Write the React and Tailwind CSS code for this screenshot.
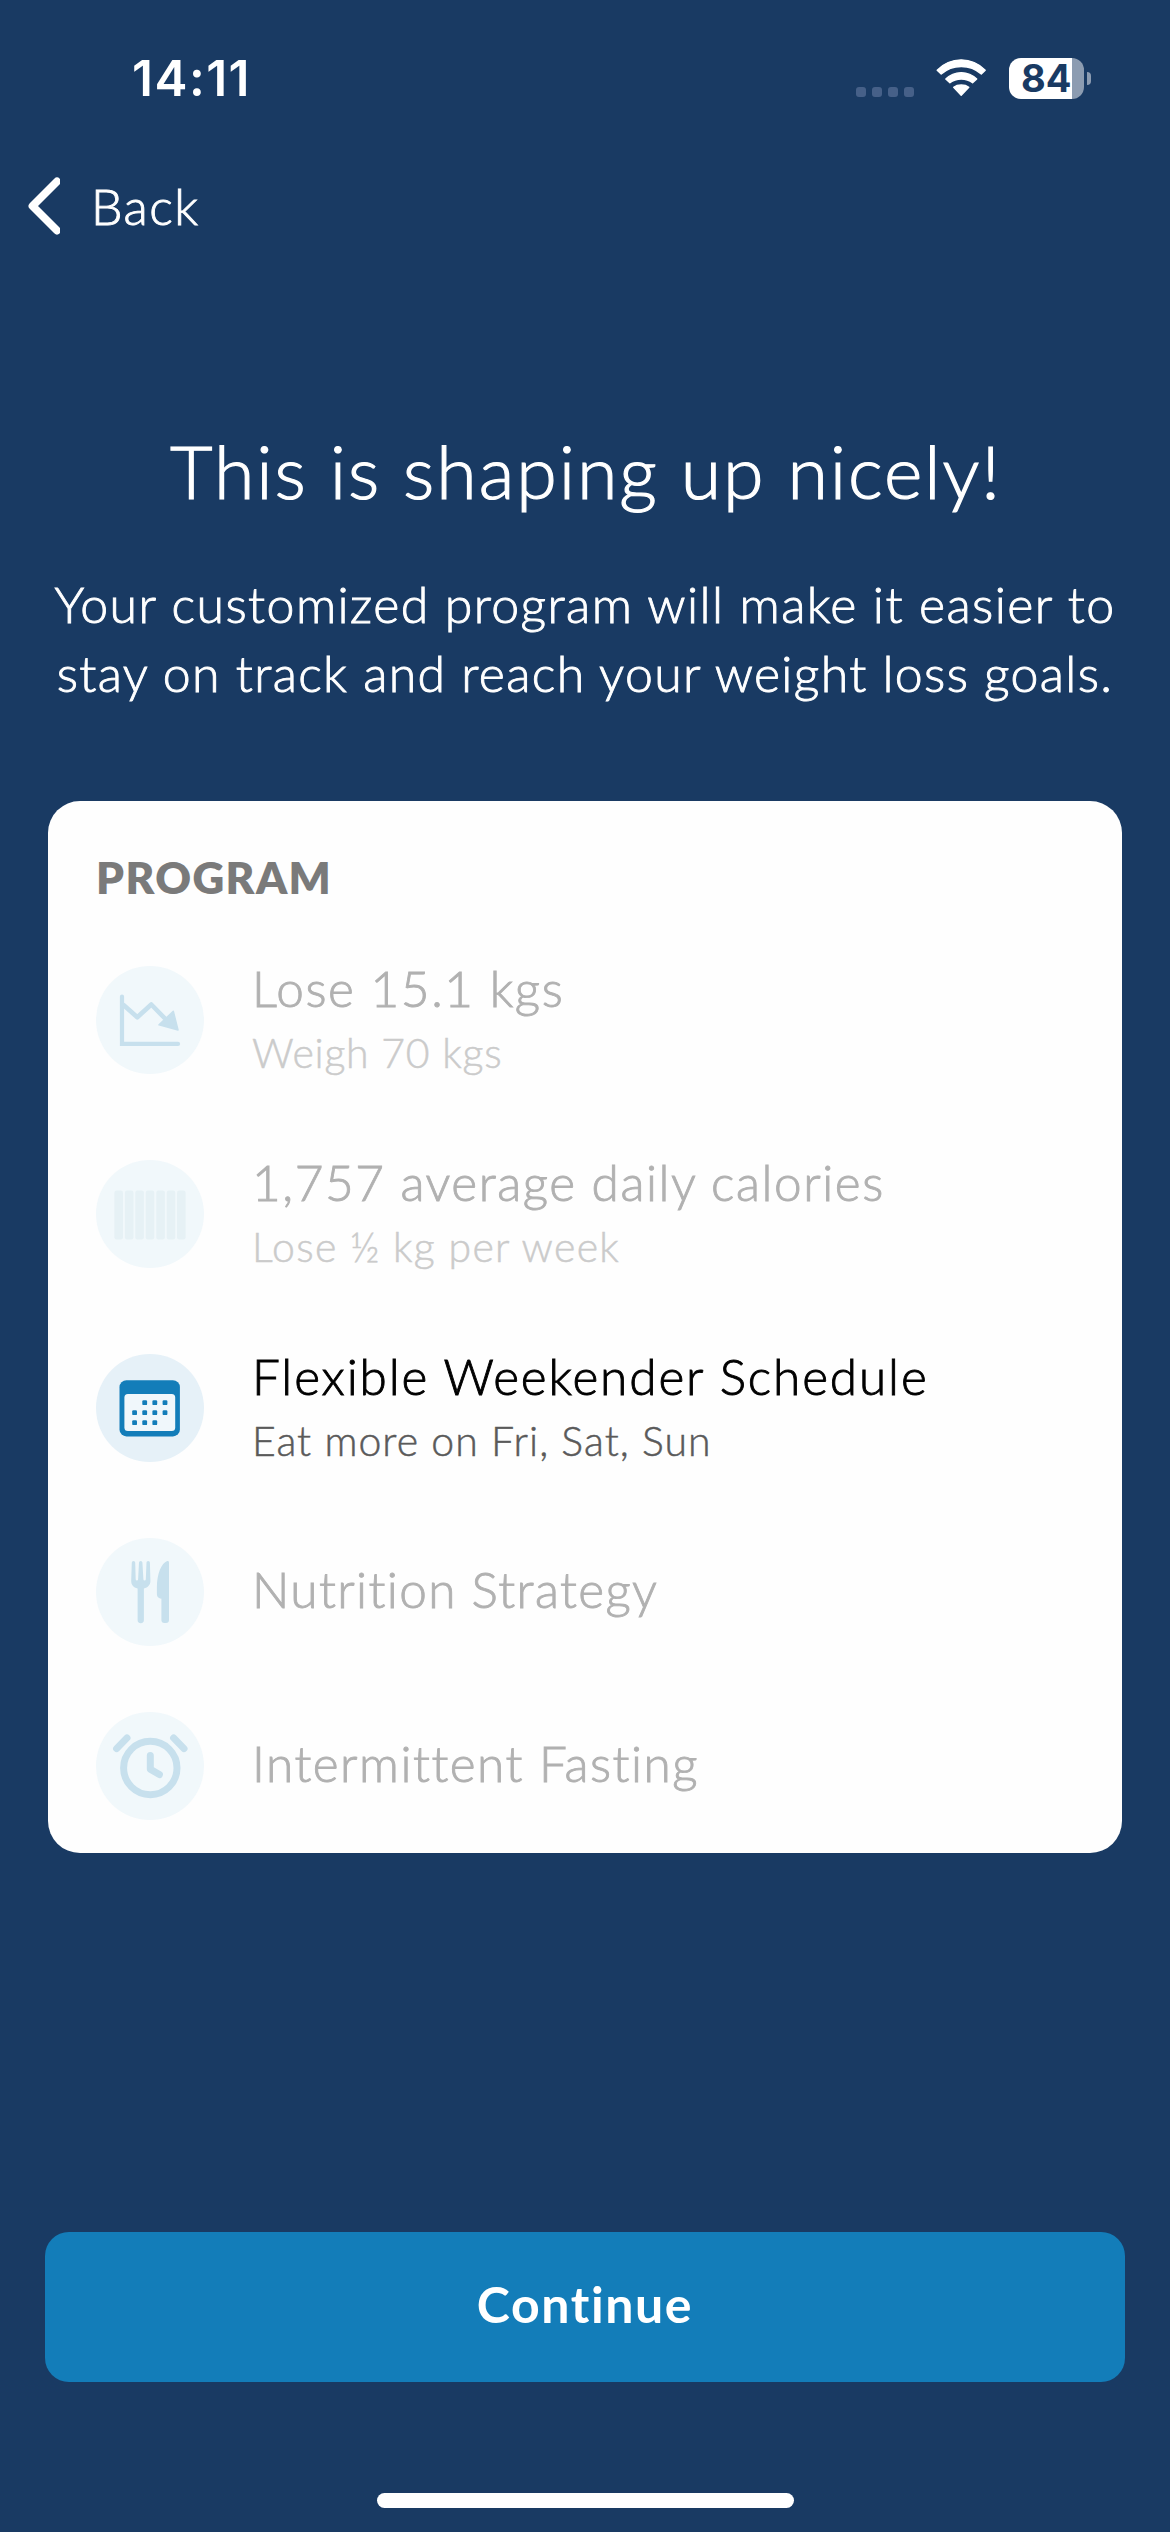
const FAINT = "#c7e0ed";

function ChartIcon() {
  return (
    <svg viewBox="0 0 108 108" className="size-full" fill="none">
      <path d="M26 30.5V77.9H82" stroke={FAINT} strokeWidth="4.2" strokeLinecap="round" />
      <path d="M27 38.5L41.3 51.3L55.3 38.5L70 53.5" stroke={FAINT} strokeWidth="4.6" strokeLinejoin="round" />
      <path d="M77.3 45.2L82 64L63 58.8Z" fill={FAINT} stroke={FAINT} strokeWidth="1.5" strokeLinejoin="round" />
    </svg>
  );
}

function BarsIcon() {
  return (
    <svg viewBox="0 0 108 108" className="size-full" fill="#e6f1f5">
      {[18.4, 28.9, 39.3, 49.7, 60.3, 70.7, 81].map((x) => (
        <rect key={x} x={x} y="30.6" width="8.6" height="48.8" rx="2.2" />
      ))}
    </svg>
  );
}

function CalendarIcon() {
  const dots = [
    [48.7, 48.7], [58.8, 48.7], [69, 48.7],
    [38.6, 58.7], [48.7, 58.7], [58.8, 58.7], [69, 58.7],
    [38.6, 68.7], [48.7, 68.7], [58.8, 68.7],
  ];
  return (
    <svg viewBox="0 0 108 108" className="size-full" fill="#137db9">
      <rect x="23.5" y="26.2" width="60.4" height="56.2" rx="7" />
      <rect x="28.4" y="40" width="50.8" height="37" rx="3.5" fill="#f0f7fb" />
      {dots.map(([x, y]) => (
        <rect key={`${x}-${y}`} x={x - 2.4} y={y - 2.4} width="4.8" height="4.8" rx="1.2" />
      ))}
    </svg>
  );
}

function CutleryIcon() {
  return (
    <svg viewBox="0 0 108 108" className="size-full" fill={FAINT}>
      <path d="M35.8 24.6a1.7 1.7 0 0 1 3.4 0L39.7 41.2a1.2 1.2 0 0 0 2.4 0L43 24.6a1.7 1.7 0 0 1 3.4 0L47.4 41.2a1.2 1.2 0 0 0 2.4 0L50.5 24.6a1.7 1.7 0 0 1 3.4 0L54.4 43C54.4 47 52 49.2 47.9 50.6V82a3.1 3.1 0 0 1-6.3 0V50.6C37.4 49.2 35.2 47 35.2 43Z" />
      <path d="M71.2 23.1C72.4 22.9 73 23.5 73 24.8V82a3 3 0 0 1-3 3h-1.6a3 3 0 0 1-3-3V60.8C61.8 60.2 60.9 58.6 60.9 55.6V49C61 36 65.4 25.2 71.2 23.1Z" />
    </svg>
  );
}

function AlarmIcon() {
  return (
    <svg viewBox="0 0 108 108" className="size-full" fill="none" stroke={FAINT} strokeWidth="7">
      <circle cx="54.3" cy="56" r="26.7" />
      <path d="M54.3 43.5V57.2L63.4 62.6" strokeLinecap="round" strokeLinejoin="round" />
      <path d="M20.6 36.6L31 25.9M77.6 25.9L88 36.6" strokeLinecap="round" />
    </svg>
  );
}

const rows = [
  { Icon: ChartIcon, title: "Lose 15.1 kgs", sub: "Weigh 70 kgs", titleGap: "tracking-[1.6px]", subGap: "tracking-[0.75px]" },
  { Icon: BarsIcon, title: "1,757 average daily calories", sub: "Lose ½ kg per week", titleGap: "tracking-[1.55px]", subGap: "tracking-[1.3px]" },
  { Icon: CalendarIcon, title: "Flexible Weekender Schedule", sub: "Eat more on Fri, Sat, Sun", titleGap: "tracking-[1.88px]", subGap: "tracking-[1.05px]", active: true },
  { Icon: CutleryIcon, title: "Nutrition Strategy", titleGap: "tracking-[1.37px]" },
  { Icon: AlarmIcon, title: "Intermittent Fasting", titleGap: "tracking-[1.5px]" },
];

function ProgramRow({ Icon, title, sub, titleGap, subGap, active }) {
  return (
    <li className="flex items-center gap-12">
      <div className={`size-[108px] shrink-0 rounded-full ${active ? "bg-[#e6f1f8]" : "bg-[#f1f8fb]"}`}>
        <Icon />
      </div>
      <div className={`font-light whitespace-nowrap ${sub ? "" : "pb-1.5"}`}>
        <div className={`text-[49.5px] leading-[64px] [-webkit-text-stroke:0.9px] ${titleGap} ${active ? "text-black" : "text-[#b1b1b1]"}`}>{title}</div>
        {sub && (
          <div className={`pt-px text-[41px] leading-[63px] [-webkit-text-stroke:0.5px] ${subGap} ${active ? "text-[#5a5a5a]" : "text-[#cbcbcb]"}`}>{sub}</div>
        )}
      </div>
    </li>
  );
}

function StatusBar() {
  return (
    <div className="flex h-[108px] items-center justify-between pt-12 pr-[79px] pl-[132px] font-['Inter',sans-serif]">
      <div className="text-[49.5px] leading-[60px] font-semibold tracking-[1.5px]">14:11</div>
      <div className="flex items-center">
        <div className="mt-[27px] flex gap-1.5">
          {[0, 1, 2, 3].map((i) => (
            <span key={i} className="size-2.5 rounded-[3px] bg-[#466088]" />
          ))}
        </div>
        <svg viewBox="0 0 51 38" className="mr-[22px] ml-[22px] h-[38px] w-[51px]" fill="#fff" stroke="#fff" strokeWidth="1.4" strokeLinejoin="round">
          <path d="M1.2 11.2C14.5 -2.6 35.8 -2.6 49.2 11.2L45.3 15C34.2 4.9 16.4 4.9 5.2 15Z" />
          <path d="M9.8 20.1C18.2 11.4 32.2 11.4 40.7 20.1L36.6 23.8C30.3 18.7 20.2 18.7 13.9 23.8Z" />
          <path d="M17.7 28.2C21.7 25.3 28.8 25.3 32.8 28.2L25.2 36.3Z" />
        </svg>
        <div className="flex items-center gap-[3px]">
          <div className="flex h-[41px] w-[75px] items-center rounded-xl bg-[linear-gradient(90deg,#fff_63px,#8c9cb1_63px)] pl-3 text-[38px] leading-[41px] font-bold text-[#193a63]">84</div>
          <div className="h-[13px] w-1 rounded-r-full bg-[#8c9cb1]" />
        </div>
      </div>
    </div>
  );
}

export default function App() {
  return (
    <main className="flex h-[2532px] w-[1170px] flex-col overflow-hidden bg-[#193a63] font-['Lato',sans-serif] text-white">
      <StatusBar />
      <button className="mt-[68px] flex h-[60px] w-fit items-center gap-[31px] pl-[27px]">
        <svg viewBox="0 0 33 58" className="h-[58px] w-[33px]" fill="none" stroke="#fff" strokeWidth="7.8" strokeLinecap="round" strokeLinejoin="round">
          <path d="M30 4.5L5.5 29L30 53.5" />
        </svg>
        <span className="text-[50px] leading-[60px] font-light tracking-[1.4px] [-webkit-text-stroke:0.9px]">Back</span>
      </button>
      <h1 className="mt-[191px] pl-0.5 text-center text-[73.5px] leading-[88px] font-light tracking-[1.95px] [-webkit-text-stroke:1.2px]">
        This is shaping up nicely!
      </h1>
      <p className="mt-[55px] text-center text-[50px] leading-[69px] font-light whitespace-nowrap [-webkit-text-stroke:0.9px]">
        <span className="tracking-[1.42px]">Your customized program will make it easier to</span>
        <br />
        <span className="tracking-[1.32px]">stay on track and reach your weight loss goals.</span>
      </p>
      <section className="mx-12 mt-[93px] h-[1052px] rounded-[32px] bg-[#fefefe] px-12 pt-[46px]">
        <h2 className="text-[44px] leading-[60px] font-extrabold tracking-[1.4px] text-[#7a7a7a]">PROGRAM</h2>
        <ul className="mt-[49px] flex flex-col gap-[66px]">
          {rows.map((row) => (
            <ProgramRow key={row.title} {...row} />
          ))}
        </ul>
      </section>
      <button className="mx-[45px] mt-auto h-[150px] rounded-3xl bg-[#137db9] pb-1.5 text-[50px] font-bold tracking-[1.6px]">
        Continue
      </button>
      <div className="mx-auto mt-[111px] mb-6 h-[15px] w-[417px] rounded-full bg-white" />
    </main>
  );
}
